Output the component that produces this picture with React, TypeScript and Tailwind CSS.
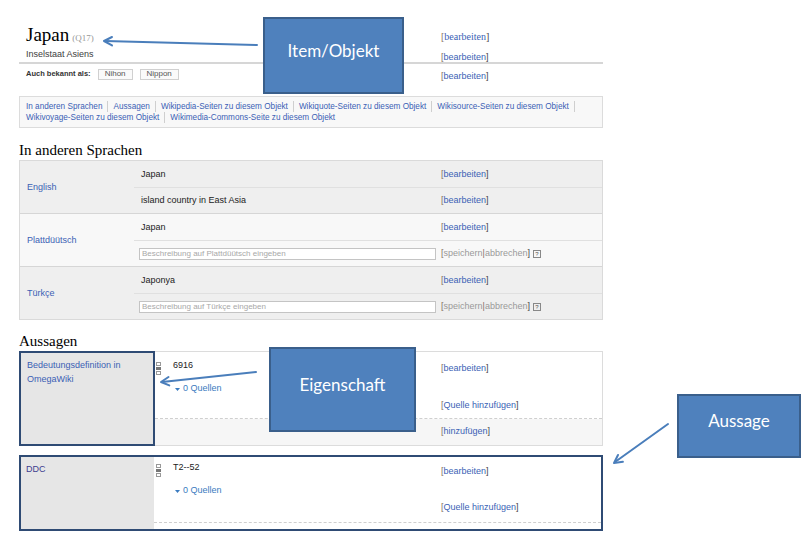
import React from 'react';

const SANS = "font-['Liberation_Sans',Arial,sans-serif]";
const SERIF = "font-['Liberation_Serif','Times_New_Roman',serif]";

const Edit: React.FC<{ label: string; serif?: boolean }> = ({ label, serif }) => (
  <span className={serif ? `${SERIF} text-[10px]` : 'text-[9px]'}>
    <span className="text-[#86705f]">[</span>
    <span className="text-[#3b5fb5]">{label}</span>
    <span className="text-[#444]">]</span>
  </span>
);

const SaveCancel: React.FC = () => (
  <span className="flex items-center text-[9px]">
    <span className="text-[#86705f]">[</span>
    <span className="text-[#9a9a9a]">speichern</span>
    <span className="text-[#86705f]">|</span>
    <span className="text-[#9a9a9a]">abbrechen</span>
    <span className="text-[#444]">]</span>
    <span className="ml-[3px] flex h-[8px] w-[8px] items-center justify-center border border-[#888] text-[6px] leading-none text-[#555]">
      ?
    </span>
  </span>
);

const RankIcon: React.FC = () => (
  <svg width="5" height="13" viewBox="0 0 5 13">
    <rect x="0.5" y="0.5" width="4" height="3" fill="#fff" stroke="#999" />
    <rect x="0" y="5" width="5" height="3" fill="#777" />
    <rect x="0.5" y="9.5" width="4" height="3" fill="#fff" stroke="#999" />
  </svg>
);

const Quellen: React.FC = () => (
  <div className="mt-[10px] flex h-[14px] items-center pl-[2px] text-[9px] text-[#3a7bc0]">
    <svg width="5" height="3" viewBox="0 0 5 3">
      <polygon points="0,0 5,0 2.5,3" fill="#3a7bc0" />
    </svg>
    <span className="ml-[3px]">0 Quellen</span>
  </div>
);

const toolbarRow1 = [
  'In anderen Sprachen',
  'Aussagen',
  'Wikipedia-Seiten zu diesem Objekt',
  'Wikiquote-Seiten zu diesem Objekt',
  'Wikisource-Seiten zu diesem Objekt',
];
const toolbarRow2 = ['Wikivoyage-Seiten zu diesem Objekt', 'Wikimedia-Commons-Seite zu diesem Objekt'];

const languages = [
  { name: 'English', label: 'Japan', desc: 'island country in East Asia', bg: 'bg-[#efefef]' },
  { name: 'Plattdüütsch', label: 'Japan', placeholder: 'Beschreibung auf Plattdüütsch eingeben', bg: 'bg-[#f8f8f8]' },
  { name: 'Türkçe', label: 'Japonya', placeholder: 'Beschreibung auf Türkçe eingeben', bg: 'bg-[#efefef]' },
];

export default function App() {
  return (
    <div className={`relative h-[546px] w-[811px] overflow-hidden bg-white ${SANS}`}>
      <div className="ml-[19px] w-[584px] pt-[22px]">
        {/* item header */}
        <div className="flex h-[26px] items-center">
          <div className="flex flex-1 items-baseline pl-[7px]">
            <span className={`${SERIF} text-[19px] leading-none text-black`}>Japan</span>
            <span className={`${SERIF} ml-[3px] text-[9px] text-[#999]`}>(Q17)</span>
          </div>
          <div className="w-[162px]">
            <Edit label="bearbeiten" serif />
          </div>
        </div>
        <div className="flex h-[14px] items-center">
          <div className="flex-1 pl-[7px] text-[9px] text-[#404040]">Inselstaat Asiens</div>
          <div className="w-[162px]">
            <Edit label="bearbeiten" />
          </div>
        </div>
        <div className="h-[2px] bg-[#d6d6d6]" />
        <div className="flex h-[20px] items-center">
          <div className="flex flex-1 items-center pl-[7px]">
            <span className="text-[7.5px] font-bold text-[#333]">Auch bekannt als:</span>
            <span className="ml-[7px] flex h-[11px] w-[35px] items-center justify-center border border-[#d0d0d0] bg-[#fafafa] text-[8px] text-[#555]">
              Nihon
            </span>
            <span className="ml-[7px] flex h-[11px] w-[39px] items-center justify-center border border-[#d0d0d0] bg-[#fafafa] text-[8px] text-[#555]">
              Nippon
            </span>
          </div>
          <div className="w-[162px]">
            <Edit label="bearbeiten" />
          </div>
        </div>

        {/* toolbar */}
        <div className="mt-[12px] border border-[#dcdcdc] bg-[#f8f8f8] px-[6px] py-[4px] text-[8.2px] leading-[11px] text-[#3b5fb5]">
          <div className="flex items-center">
            {toolbarRow1.map((t) => (
              <React.Fragment key={t}>
                <span>{t}</span>
                <span className="mx-[5px] h-[11px] border-l border-[#cfcfcf]" />
              </React.Fragment>
            ))}
          </div>
          <div className="flex items-center">
            {toolbarRow2.map((t, i) => (
              <React.Fragment key={t}>
                <span>{t}</span>
                {i === 0 && <span className="mx-[5px] h-[11px] border-l border-[#cfcfcf]" />}
              </React.Fragment>
            ))}
          </div>
        </div>

        {/* languages */}
        <h2 className={`${SERIF} mt-[12px] h-[20px] text-[15px] leading-[20px] text-black`}>In anderen Sprachen</h2>
        <div className="border border-[#dadada]">
          {languages.map((l, i) => (
            <div key={l.name} className={`flex ${l.bg} ${i < 2 ? 'border-b border-[#d6d6d6]' : ''}`}>
              <div className="flex w-[114px] items-center pl-[7px] pt-[1px] text-[9px] text-[#3b5fb5]">{l.name}</div>
              <div className="flex flex-1 flex-col">
                <div className="flex h-[27px] items-center border-b border-[#e0e0e0] pt-[1px]">
                  <div className="w-[307px] pl-[7px] text-[9px] text-[#222]">{l.label}</div>
                  <Edit label="bearbeiten" />
                </div>
                <div className="flex h-[25px] items-center pt-[1px]">
                  {l.desc ? (
                    <div className="w-[307px] pl-[7px] text-[9px] text-[#222]">{l.desc}</div>
                  ) : (
                    <div className="w-[307px] pl-[5px]">
                      <input
                        readOnly
                        placeholder={l.placeholder}
                        className="block h-[12px] w-[297px] border border-[#c4c4c4] bg-white pl-[2px] text-[8px] placeholder:text-[#a8a8a8]"
                      />
                    </div>
                  )}
                  {l.desc ? <Edit label="bearbeiten" /> : <SaveCancel />}
                </div>
              </div>
            </div>
          ))}
        </div>

        {/* statements */}
        <h2 className={`${SERIF} mt-[11px] h-[20px] text-[15px] leading-[20px] text-black`}>Aussagen</h2>
        <div className="flex border border-[#dcdcdc]">
          <div className="-my-px -ml-px w-[136px] border-2 border-[#2f4b74] bg-[#e6e6e6] pl-[6px] pt-[5px] text-[9px] leading-[14px] text-[#3b5fb5]">
            Bedeutungsdefinition in
            <br />
            OmegaWiki
          </div>
          <div className="flex flex-1 flex-col">
            <div className="flex h-[67px] border-b border-dashed border-[#cfcfcf] bg-white">
              <div className="w-[18px] pl-[1px] pt-[10px]">
                <RankIcon />
              </div>
              <div className="w-[268px] pt-[6px]">
                <div className="h-[14px] text-[9px] leading-[14px] text-[#222]">6916</div>
                <Quellen />
              </div>
              <div className="flex-1 pt-[7px]">
                <div className="h-[14px] leading-[14px]">
                  <Edit label="bearbeiten" />
                </div>
                <div className="mt-[23px] h-[14px] leading-[14px]">
                  <Edit label="Quelle hinzufügen" />
                </div>
              </div>
            </div>
            <div className="flex h-[26px] items-center bg-[#f6f6f6]">
              <div className="w-[286px]" />
              <Edit label="hinzufügen" />
            </div>
          </div>
        </div>

        <div className="mt-[9px] flex border-2 border-[#2f4b74]">
          <div className="w-[133px] bg-[#e6e6e6] pl-[5px] pt-[5px] text-[9px] leading-[14px] text-[#3d3d8f]">DDC</div>
          <div className="flex flex-1 flex-col pb-[6px]">
            <div className="flex h-[66px] border-b border-dashed border-[#cfcfcf] bg-white">
              <div className="w-[19px] pl-[2px] pt-[7px]">
                <RankIcon />
              </div>
              <div className="w-[268px] pt-[3px]">
                <div className="h-[14px] text-[9px] leading-[14px] text-[#222]">T2--52</div>
                <Quellen />
              </div>
              <div className="flex-1 pt-[5px]">
                <div className="h-[14px] leading-[14px]">
                  <Edit label="bearbeiten" />
                </div>
                <div className="mt-[22px] h-[14px] leading-[14px]">
                  <Edit label="Quelle hinzufügen" />
                </div>
              </div>
            </div>
          </div>
        </div>
      </div>

      {/* annotation callouts */}
      <div className="absolute left-[263px] top-[17px] flex h-[77px] w-[141px] items-center justify-center border-2 border-[#3a5f8b] bg-[#4f81bd] pb-[10px] font-['Lato',sans-serif] text-[17px] text-white">
        Item/Objekt
      </div>
      <div className="absolute left-[269px] top-[347px] flex h-[85px] w-[147px] items-center justify-center border-2 border-[#3a5f8b] bg-[#4f81bd] pb-[10px] font-['Lato',sans-serif] text-[17px] text-white">
        Eigenschaft
      </div>
      <div className="absolute left-[677px] top-[394px] flex h-[64px] w-[124px] items-center justify-center border-2 border-[#3a5f8b] bg-[#4f81bd] pb-[10px] font-['Lato',sans-serif] text-[17px] text-white">
        Aussage
      </div>
      <svg className="pointer-events-none absolute left-0 top-0" width="811" height="546" viewBox="0 0 811 546">
        <g stroke="#4a7ebb" strokeWidth="2" fill="none" strokeLinecap="round" strokeLinejoin="round">
          <line x1="257" y1="45" x2="105" y2="41" />
          <polyline points="112,37 104,41 112,45.4" />
          <line x1="256" y1="372" x2="162" y2="382" />
          <polyline points="168.5,377 161,382 169.3,385.4" />
          <line x1="668" y1="424" x2="615" y2="462" />
          <polyline points="618,455 614,463 622.9,461.8" />
        </g>
      </svg>
    </div>
  );
}
